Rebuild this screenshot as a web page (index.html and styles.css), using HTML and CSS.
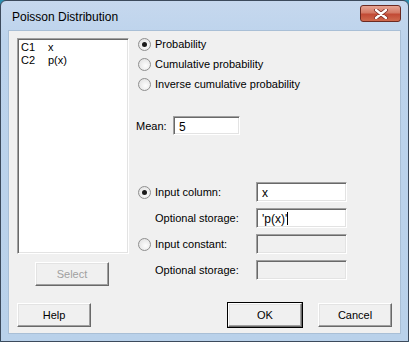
FILE: index.html
```html
<!DOCTYPE html>
<html lang="en">
  <head>
    <meta charset="UTF-8" />
    <title>Poisson Distribution</title>
    <link rel="stylesheet" href="styles.css">
  </head>
  <body>
    <div class="window">
      <div class="titlebar">
        <span class="title">Poisson Distribution</span>
        <span class="close">
          <svg width="16" height="10" viewBox="0 0 16 10">
            <path d="M3 1 L13 9 M13 1 L3 9" stroke="#7a2a22" stroke-width="4" stroke-linecap="round"/>
            <path d="M3 1 L13 9 M13 1 L3 9" stroke="#ffffff" stroke-width="2.4" stroke-linecap="round"/>
          </svg>
        </span>
      </div>

      <div class="client">
        <div class="main">
          <!-- column list -->
          <div class="left">
            <div class="listbox">
              <div class="col-item"><span class="cnum">C1</span><span>x</span></div>
              <div class="col-item"><span class="cnum">C2</span><span>p(x)</span></div>
            </div>
            <button class="btn btn-select" disabled>Select</button>
          </div>

          <!-- options -->
          <div class="right">
            <div class="radios">
              <label class="radio-row"><span class="radio checked"></span>Probability</label>
              <label class="radio-row"><span class="radio"></span>Cumulative probability</label>
              <label class="radio-row"><span class="radio"></span>Inverse cumulative probability</label>
            </div>

            <div class="mean-row">
              <span class="mean-label">Mean:</span>
              <div class="field field-mean">5</div>
            </div>

            <div class="inputs">
              <div class="form-row">
                <label class="radio-row row-label"><span class="radio checked"></span>Input column:</label>
                <div class="field">x</div>
              </div>
              <div class="form-row">
                <span class="row-label sub">Optional storage:</span>
                <div class="field">'p(x)'<span class="caret"></span></div>
              </div>
              <div class="form-row">
                <label class="radio-row row-label"><span class="radio"></span>Input constant:</label>
                <div class="field disabled"></div>
              </div>
              <div class="form-row">
                <span class="row-label sub">Optional storage:</span>
                <div class="field disabled"></div>
              </div>
            </div>
          </div>
        </div>

        <div class="footer">
          <button class="btn">Help</button>
          <div class="footer-right">
            <button class="btn btn-default">OK</button>
            <button class="btn">Cancel</button>
          </div>
        </div>
      </div>
    </div>
  </body>
</html>
```

FILE: styles.css
```css
body {
  margin: 0;
  padding: 0;
  font-family: "Liberation Sans", Arial, sans-serif;
  font-size: 11px;
  color: #000;
  background: #2c8fb0;
}
.window {
  width: 409px;
  height: 342px;
  box-sizing: border-box;
  border: 1px solid #3c4a5c;
  border-radius: 6px 6px 0 0;
  background: linear-gradient(#c6d8ee, #bcd3ec 40px, #b9d1ea);
  display: flex;
  flex-direction: column;
}
.titlebar {
  height: 29px;
  display: flex;
  align-items: center;
  justify-content: space-between;
  padding: 0 0 0 11px;
}
.title {
  font-size: 12px;
  color: #000;
  margin-top: 2px;
}
.close {
  width: 41px;
  height: 17px;
  margin: 0 7px 0 0;
  box-sizing: border-box;
  border: 1px solid #6b2a22;
  border-radius: 3px;
  background: linear-gradient(#e8a493, #d47a66 45%, #c24a35 55%, #cf6a4e);
  display: flex;
  align-items: center;
  justify-content: center;
  margin-top: -4px;
}
.client {
  flex: 1;
  margin: 0 7px 7px 7px;
  background: #f0f0f0;
  border: 1px solid #a9bfd6;
  padding: 7px 8px 6px 8px;
  display: flex;
  flex-direction: column;
}
.main {
  display: flex;
  flex: 1;
}
.left {
  width: 112px;
  display: flex;
  flex-direction: column;
}
.listbox {
  height: 216px;
  box-sizing: border-box;
  background: #fff;
  border-top: 1px solid #a0a0a0;
  border-left: 1px solid #a0a0a0;
  border-right: 1px solid #fff;
  border-bottom: 1px solid #fff;
  box-shadow: inset 1px 1px 0 #696969, inset -1px -1px 0 #e3e3e3;
  padding: 2px 3px;
}
.col-item {
  display: flex;
  height: 13px;
  line-height: 13px;
}
.cnum {
  width: 27px;
}
.btn {
  font-family: "Liberation Sans", Arial, sans-serif;
  font-size: 11px;
  width: 74px;
  height: 24px;
  box-sizing: border-box;
  background: #f0f0f0;
  color: #000;
  border-top: 1px solid #fff;
  border-left: 1px solid #fff;
  border-right: 1px solid #696969;
  border-bottom: 1px solid #696969;
  box-shadow: inset -1px -1px 0 #a0a0a0, inset 1px 1px 0 #e3e3e3;
  padding: 0;
}
.btn-select {
  margin: 8px 0 0 18px;
  color: #a0a0a0;
}
.btn-default {
  outline: 1px solid #000;
  outline-offset: 0;
}
.right {
  flex: 1;
  margin-left: 9px;
  margin-top: -4px;
}
.radios {
  display: flex;
  flex-direction: column;
}
.radio-row {
  display: flex;
  align-items: center;
  height: 20px;
}
.radio {
  width: 13px;
  height: 13px;
  box-sizing: border-box;
  border-radius: 50%;
  border: 1px solid #8f8f8f;
  background: radial-gradient(circle at 60% 60%, #fdfdfd, #dcdcdc);
  margin-right: 4px;
  position: relative;
  flex: none;
}
.radio.checked::after {
  content: "";
  position: absolute;
  left: 3px;
  top: 3px;
  width: 5px;
  height: 5px;
  border-radius: 50%;
  background: #1a1a1a;
}
.mean-row {
  display: flex;
  align-items: center;
  margin-top: 22px;
  margin-left: -2px;
}
.mean-label {
  width: 37px;
}
.field {
  width: 67px;
  height: 19px;
  box-sizing: border-box;
  background: #fff;
  border-top: 1px solid #a0a0a0;
  border-left: 1px solid #a0a0a0;
  border-right: 1px solid #fff;
  border-bottom: 1px solid #fff;
  box-shadow: inset 1px 1px 0 #696969, inset -1px -1px 0 #e3e3e3;
  padding: 3px 4px 0 5px;
  font-size: 12px;
  line-height: 14px;
}
.inputs {
  margin-top: 47px;
  display: flex;
  flex-direction: column;
  gap: 6px;
}
.form-row {
  display: flex;
  align-items: center;
  height: 20px;
}
.row-label {
  width: 118px;
}
.row-label.sub {
  padding-left: 17px;
  box-sizing: border-box;
}
.form-row .field {
  width: 91px;
  height: 20px;
}
.field.disabled {
  background: #f0f0f0;
}
.caret {
  display: inline-block;
  width: 1px;
  height: 13px;
  background: #000;
  vertical-align: -2px;
}
.footer {
  display: flex;
  justify-content: space-between;
  align-items: flex-end;
}
.footer-right {
  display: flex;
  gap: 16px;
}
```
